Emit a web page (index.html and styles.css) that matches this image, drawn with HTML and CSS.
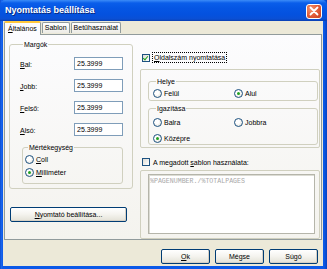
FILE: index.html
```html
<!DOCTYPE html>
<html>
<head>
<meta charset="utf-8">
<link rel="stylesheet" href="styles.css">
</head>
<body>
<div class="window">
  <div class="titlebar">
    <span class="title">Nyomtatás beállítása</span>
    <span class="close"><svg width="10" height="10" viewBox="0 0 10 10"><path d="M1.5 1.5 L8.5 8.5 M8.5 1.5 L1.5 8.5" stroke="#fff" stroke-width="1.8" stroke-linecap="round"/></svg></span>
  </div>
  <div class="client">
    <div class="tabs">
      <div class="tab active"><u>Á</u>ltalános</div>
      <div class="tab">Sablon</div>
      <div class="tab">Betűhasználat</div>
    </div>
    <div class="panel">
      <div class="col-left">
        <fieldset class="group margins">
          <legend>Margók</legend>
          <div class="row"><span class="lbl"><u>B</u>al:</span><span class="field">25.3999</span></div>
          <div class="row"><span class="lbl"><u>J</u>obb:</span><span class="field">25.3999</span></div>
          <div class="row"><span class="lbl"><u>F</u>első:</span><span class="field">25.3999</span></div>
          <div class="row"><span class="lbl"><u>A</u>lsó:</span><span class="field">25.3999</span></div>
          <fieldset class="group units">
            <legend>Mértékegység</legend>
            <div class="opt"><span class="radio"></span><span><u>C</u>oll</span></div>
            <div class="opt"><span class="radio on"></span><span><u>M</u>illiméter</span></div>
          </fieldset>
        </fieldset>
        <div class="btn wide"><span><u>N</u>yomtató beállítása...</span></div>
      </div>
      <div class="col-right">
        <div class="opt check-row"><span class="check on"></span><span class="focus"><u>O</u>ldalszám nyomtatása</span></div>
        <div class="frame">
          <fieldset class="group place">
            <legend>Helye</legend>
            <div class="pair">
              <div class="opt"><span class="radio"></span><span>Felül</span></div>
              <div class="opt"><span class="radio on"></span><span>Alul</span></div>
            </div>
          </fieldset>
          <fieldset class="group align">
            <legend>Igazítása</legend>
            <div class="pair">
              <div class="opt"><span class="radio"></span><span>Balra</span></div>
              <div class="opt"><span class="radio"></span><span>Jobbra</span></div>
            </div>
            <div class="pair second">
              <div class="opt"><span class="radio on"></span><span>Középre</span></div>
            </div>
          </fieldset>
        </div>
        <div class="opt check-row second"><span class="check"></span><span>A megadott <u>s</u>ablon használata:</span></div>
        <div class="frame tframe">
          <div class="textarea">%PAGENUMBER./%TOTALPAGES</div>
        </div>
      </div>
    </div>
    <div class="buttons">
      <div class="btn"><span><u>O</u>k</span></div>
      <div class="btn"><span>Mégse</span></div>
      <div class="btn"><span>Súgó</span></div>
    </div>
  </div>
</div>
</body>
</html>
```

FILE: styles.css
```css
html, body {
  margin: 0;
  padding: 0;
  background: #0054E3;
}
body {
  font-family: "Liberation Sans", Arial, sans-serif;
  font-size: 7px;
  color: #000;
}
.window {
  width: 327px;
  height: 269px;
  display: flex;
  flex-direction: column;
  background: linear-gradient(90deg, #0842C0 0, #1B67EE 1px, #0B59E8 3px, #0B59E8 calc(100% - 3px), #0842C0 100%);
  overflow: hidden;
}
.titlebar {
  height: 21px;
  flex: none;
  display: flex;
  align-items: center;
  justify-content: space-between;
  padding: 0 5px 0 5px;
  background: linear-gradient(180deg, #3C8CF8 0, #0A5EEA 3px, #0556E4 8px, #0451DE 15px, #0A4FD4 19px, #0A3FB0 21px);
  border-radius: 5px 5px 0 0;
}
.title {
  color: #fff;
  font-weight: bold;
  font-size: 9px;
  text-shadow: 1px 1px 0 #0A2A80;
  margin-top: -1px;
}
.close {
  width: 16px;
  height: 15px;
  box-sizing: border-box;
  border: 1px solid #fff;
  border-radius: 3px;
  background: radial-gradient(circle at 30% 30%, #F4956F 0, #E25C38 50%, #C53D1E 100%);
  display: flex;
  align-items: center;
  justify-content: center;
  margin-top: 1px;
}
.client {
  flex: 1;
  margin: 0 4px 3px 3px;
  background: #ECE9D8;
  display: flex;
  flex-direction: column;
  padding: 0 1px;
}
.tabs {
  display: flex;
  height: 13px;
  align-items: flex-end;
  padding-left: 0;
  position: relative;
  z-index: 1;
}
.tab {
  height: 11px;
  box-sizing: border-box;
  border: 1px solid #919B9C;
  border-bottom: none;
  border-radius: 2px 2px 0 0;
  background: linear-gradient(#FFFFFF, #ECEBE5);
  padding: 0 2px;
  line-height: 10px;
  margin-right: 1px;
  margin-bottom: 1px;
}
.tab.active {
  height: 14px;
  margin-bottom: -1px;
  background: #FCFCFE;
  border-top: 2px solid #FFC83C;
  line-height: 12px;
  padding: 0 3px;
}
.panel {
  height: 206px;
  box-sizing: border-box;
  border: 1px solid #919B9C;
  background: linear-gradient(#FCFCFE, #F4F3EE);
  display: flex;
  padding: 5px 0 0 4px;
  gap: 7px;
}
.col-left {
  width: 124px;
  display: flex;
  flex-direction: column;
}
.group {
  margin: 0;
  border: 1px solid #D0D0BF;
  border-radius: 3px;
  padding: 0;
  min-width: 0;
}
.group legend {
  padding: 0 1px;
  margin-left: 3px;
  line-height: 9px;
  height: 9px;
}
.margins {
  height: 149px;
  box-sizing: border-box;
  padding: 8px 9px 0 10px;
}
.row {
  display: flex;
  justify-content: space-between;
  align-items: center;
  height: 13px;
  margin-bottom: 9px;
}
.row:nth-of-type(4) {
  margin-bottom: 7px;
}
.lbl {
  padding-top: 1px;
}
.field {
  width: 49px;
  height: 13px;
  box-sizing: border-box;
  border: 1px solid #7F9DB9;
  background: #fff;
  padding-left: 2px;
  line-height: 11px;
}
.units {
  width: 101px;
  box-sizing: border-box;
  margin-left: 2px;
  height: 41px;
  padding: 3px 0 0 2px;
}
.opt {
  display: flex;
  align-items: center;
  height: 9px;
  gap: 2px;
  line-height: 9px;
}
.units .opt + .opt {
  margin-top: 4px;
}
.radio {
  width: 9px;
  height: 9px;
  box-sizing: border-box;
  border: 1px solid #1C5180;
  border-radius: 50%;
  background: radial-gradient(circle at 40% 40%, #fff 30%, #DCD9CE 100%);
  position: relative;
  flex: none;
}
.radio.on::after {
  content: "";
  position: absolute;
  left: 2px;
  top: 2px;
  width: 3px;
  height: 3px;
  border-radius: 50%;
  background: #21A121;
}
.check {
  width: 8px;
  height: 8px;
  box-sizing: border-box;
  border: 1px solid #1C5180;
  background: linear-gradient(135deg, #DCDBD5, #fff);
  position: relative;
  flex: none;
}
.check.on::after {
  content: "";
  position: absolute;
  left: 1px;
  top: 0;
  width: 2px;
  height: 4px;
  border: solid #21A121;
  border-width: 0 1.5px 1.5px 0;
  transform: rotate(40deg);
}
.focus {
  outline: 1px dotted #000;
  outline-offset: 0;
  padding: 0 1px;
}
.btn {
  height: 15px;
  box-sizing: border-box;
  border: 1px solid #003C74;
  border-radius: 2px;
  background: linear-gradient(#FFFFFF 0, #F4F3EE 50%, #E3E1D6 100%);
  display: flex;
  align-items: center;
  justify-content: center;
  box-shadow: inset -1px -1px 0 #D6D0C5;
}
.btn.wide {
  width: 117px;
  margin: 18px 0 0 1px;
}
.col-right {
  width: 180px;
  display: flex;
  flex-direction: column;
}
.check-row {
  margin: 13px 0 0 2px;
  gap: 3px;
}
.check-row.second {
  margin-top: 10px;
}
.frame {
  margin-top: 7px;
  border: 1px solid #D0D0BF;
  border-radius: 2px;
  height: 82px;
  padding: 7px 1px 0 7px;
  display: flex;
  flex-direction: column;
  gap: 3px;
}
.place {
  height: 24px;
  box-sizing: border-box;
  padding: 3px 0 0 4px;
}
.align {
  height: 41px;
  box-sizing: border-box;
  padding: 5px 0 0 4px;
}
.pair {
  display: flex;
}
.pair .opt {
  width: 81px;
}
.pair.second {
  margin-top: 7px;
}
.tframe {
  margin-top: 3px;
  height: 71px;
  padding: 3px 4px 4px 7px;
}
.textarea {
  flex: 1;
  border: 1px solid #B5B5AA;
  box-shadow: inset 1px 1px 0 #DCDCD4;
  background: #fff;
  font-family: "Liberation Mono", "Courier New", monospace;
  font-size: 6.6px;
  color: #A8A8A8;
  padding: 3px 1px;
}
.buttons {
  display: flex;
  justify-content: flex-end;
  gap: 5px;
  padding: 9px 4px 0 0;
}
.buttons .btn {
  width: 49px;
}
```
